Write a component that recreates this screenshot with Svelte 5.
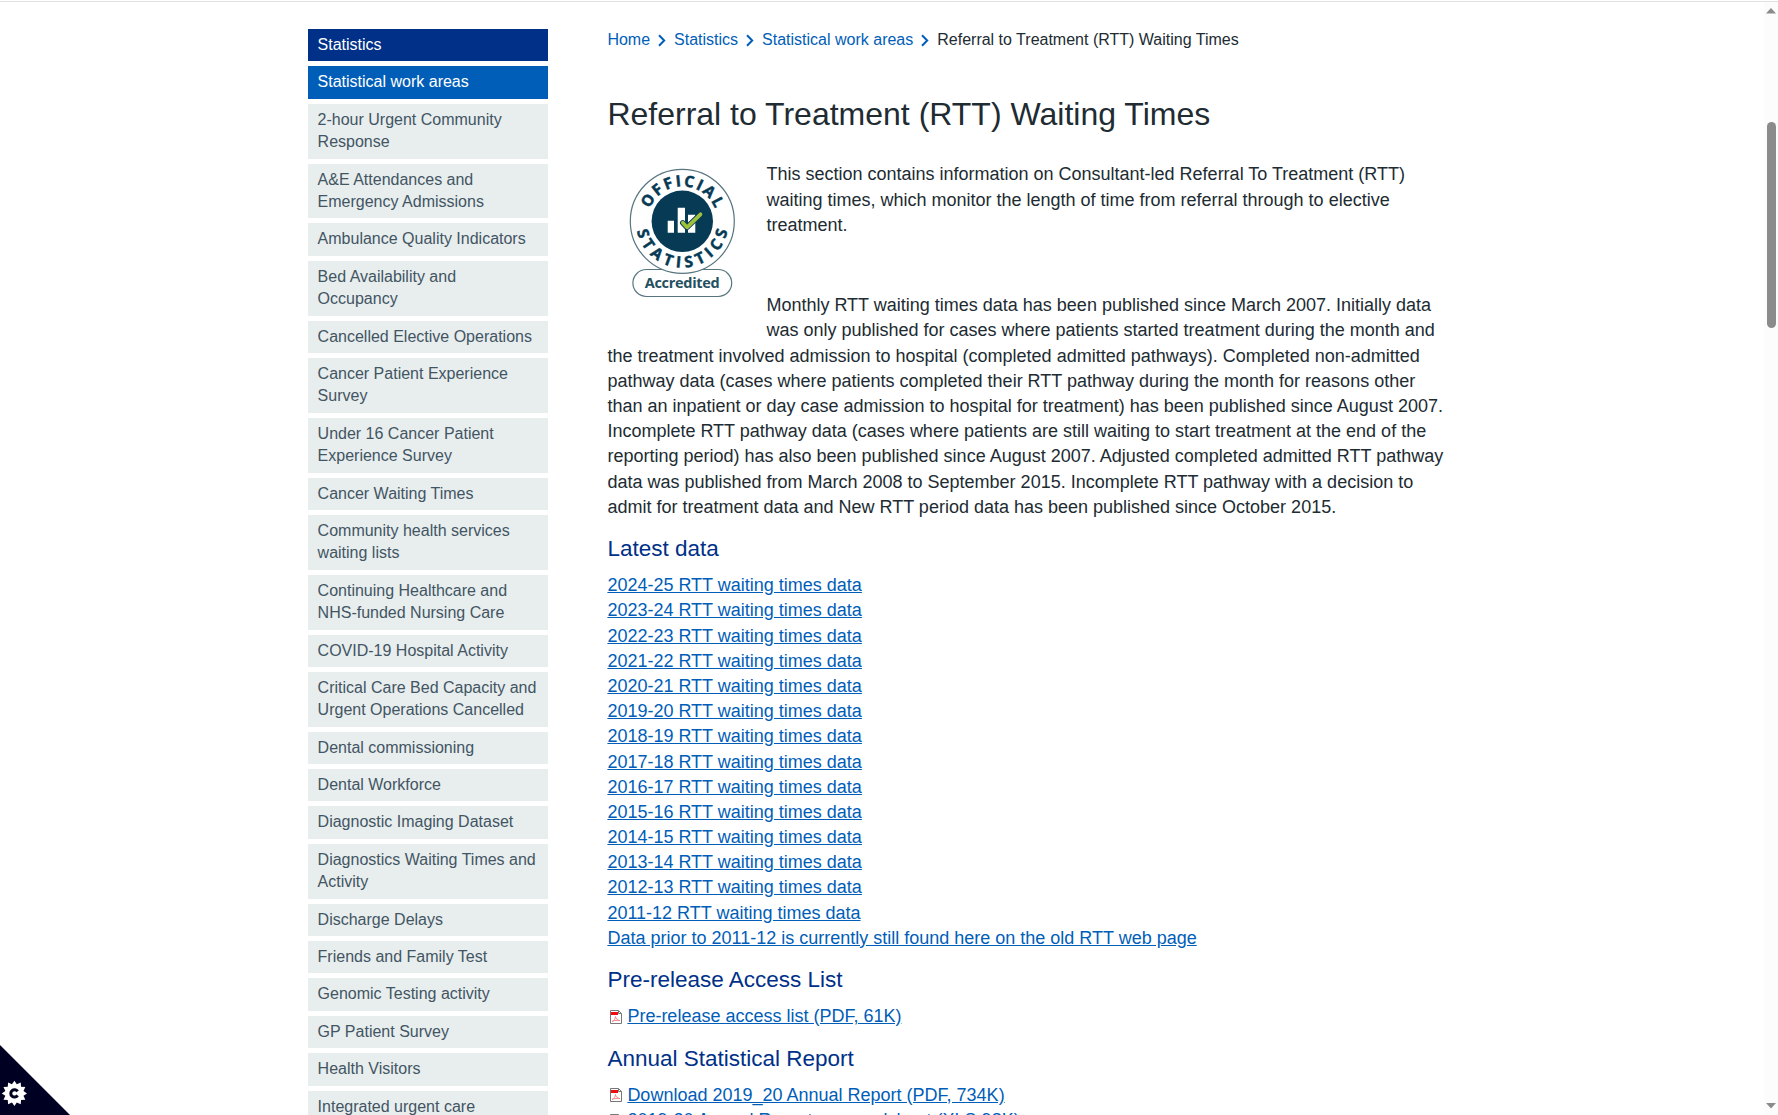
<script>
  const areas = [
    '2-hour Urgent Community Response',
    'A&E Attendances and Emergency Admissions',
    'Ambulance Quality Indicators',
    'Bed Availability and Occupancy',
    'Cancelled Elective Operations',
    'Cancer Patient Experience Survey',
    'Under 16 Cancer Patient Experience Survey',
    'Cancer Waiting Times',
    'Community health services waiting lists',
    'Continuing Healthcare and NHS-funded Nursing Care',
    'COVID-19 Hospital Activity',
    'Critical Care Bed Capacity and Urgent Operations Cancelled',
    'Dental commissioning',
    'Dental Workforce',
    'Diagnostic Imaging Dataset',
    'Diagnostics Waiting Times and Activity',
    'Discharge Delays',
    'Friends and Family Test',
    'Genomic Testing activity',
    'GP Patient Survey',
    'Health Visitors',
    'Integrated urgent care'
  ];
  const crumbs = ['Home', 'Statistics', 'Statistical work areas'];
  const years = Array.from({ length: 14 }, (_, i) => `${2024 - i}-${25 - i}`);

  // Twelve-toothed gear outline for the cookie settings button
  const gear = Array.from({ length: 24 }, (_, i) => {
    const r = i % 2 ? 9.4 : 12.6;
    const a = (i * Math.PI) / 12;
    return `${(14.4 + r * Math.cos(a)).toFixed(2)},${(48.4 + r * Math.sin(a)).toFixed(2)}`;
  }).join(' ');
</script>

{#snippet pdfIcon()}
  <svg class="file" width="12" height="14" viewBox="0 0 12 14">
    <path d="M.5.5h8l3 3v10H.5z" fill="#fff" stroke="#777" />
    <path d="M8.5.5v3h3" fill="none" stroke="#777" />
    <path d="M1 2h7v3H1z" fill="#f00d12" />
    <path d="M2 11.500c2-.8 3.500-3 3.500-5 0 2 2 3.800 4.500 4.100-2.500-.5-5.500-.3-8 .9" fill="none" stroke="#f58a8e" stroke-width="1" />
  </svg>
{/snippet}

<div class="page">
  <div class="layout">
    <nav class="side">
      <a class="root" href="#top">Statistics</a>
      <a class="current" href="#top">Statistical work areas</a>
      {#each areas as area}
        <a href="#top">{area}</a>
      {/each}
    </nav>

    <main>
      <div class="crumbs">
        {#each crumbs as crumb}
          <a href="#top">{crumb}</a>
          <svg width="8" height="13" viewBox="0 0 8 13"><path d="M1 1.200 6.200 6.500 1 11.800" fill="none" stroke="#005eb8" stroke-width="2" /></svg>
        {/each}
        <span>Referral to Treatment (RTT) Waiting Times</span>
      </div>

      <h1>Referral to Treatment (RTT) Waiting Times</h1>

      <svg class="badge" width="150" height="165" viewBox="0 0 150 165">
        <defs>
          <path id="arc-top" d="M40.300 60.300a35 35 0 0 1 70 0" />
          <path id="arc-bottom" d="M30.020 50.700a46.300 46.300 0 1 0 90.560 0" />
        </defs>
        <rect x="25.900" y="108.500" width="98.800" height="27" rx="13.500" fill="#fff" stroke="#56757f" stroke-width="1.200" />
        <circle cx="75.300" cy="60.300" r="52" fill="#fff" stroke="#56757f" stroke-width="1.200" />
        <circle cx="75.300" cy="60.300" r="30.700" fill="#063a55" />
        <text class="ring" text-anchor="middle"><textPath href="#arc-top" startOffset="50%" textLength="84">OFFICIAL</textPath></text>
        <text class="ring" text-anchor="middle"><textPath href="#arc-bottom" startOffset="50%" textLength="126">STATISTICS</textPath></text>
        <path d="M60.700 59.700h6.300v12h-6.300zM70.700 46.700h7.300v25h-7.300zM81 53.700h7.300v18H81z" fill="#fff" />
        <path d="M75.800 61.800 80 66.300 93.500 53.300" fill="none" stroke="#063a55" stroke-width="5.500" stroke-linecap="round" stroke-linejoin="round" />
        <path d="M75.800 61.800 80 66.300 93.500 53.300" fill="none" stroke="#9fc13b" stroke-width="3.700" stroke-linecap="round" stroke-linejoin="round" />
        <text class="pill" x="75.200" y="127.100" text-anchor="middle" textLength="75">Accredited</text>
      </svg>

      <p class="intro">
        This section contains information on Consultant-led Referral To Treatment (RTT) waiting times, which
        monitor the length of time from referral through to elective treatment.
      </p>
      <p>
        Monthly RTT waiting times data has been published since March 2007. Initially data was only published
        for cases where patients started treatment during the month and the treatment involved admission to
        hospital (completed admitted pathways). Completed non-admitted pathway data (cases where patients
        completed their RTT pathway during the month for reasons other than an inpatient or day case admission
        to hospital for treatment) has been published since August 2007. Incomplete RTT pathway data (cases
        where patients are still waiting to start treatment at the end of the reporting period) has also been
        published since August 2007. Adjusted completed admitted RTT pathway data was published from March 2008
        to September 2015. Incomplete RTT pathway with a decision to admit for treatment data and New RTT
        period data has been published since October 2015.
      </p>

      <h3>Latest data</h3>
      <div class="links">
        {#each years as year}
          <div><a href="#top">{year} RTT waiting times data</a></div>
        {/each}
        <div><a href="#top">Data prior to 2011-12 is currently still found here on the old RTT web page</a></div>
      </div>

      <h3>Pre-release Access List</h3>
      <div class="links">
        <div class="doc">{@render pdfIcon()}<a href="#top">Pre-release access list (PDF, 61K)</a></div>
      </div>

      <h3>Annual Statistical Report</h3>
      <div class="links">
        <div class="doc">{@render pdfIcon()}<a href="#top">Download 2019_20 Annual Report (PDF, 734K)</a></div>
        <div class="doc">
          <svg class="file" width="12" height="14" viewBox="0 0 12 14">
            <path d="M.5.5h8l3 3v10H.5z" fill="#c5e39a" stroke="#777" />
          </svg><a href="#top">2019-20 Annual Report – spreadsheet (XLS,98K)</a>
        </div>
      </div>
    </main>
  </div>

  <svg class="cookie" width="70" height="70" viewBox="0 0 70 70">
    <path d="M0 0 70 70H0z" fill="#000022" />
    <polygon points={gear} fill="#fff" />
    <path d="M17.600 46.400a3.700 3.700 0 1 0 0 4" fill="none" stroke="#000022" stroke-width="3" />
  </svg>

  <div class="scrollbar">
    <svg width="10" height="6" viewBox="0 0 10 6"><path d="M0 5.500 5 0l5 5.500z" fill="#8b8b8b" /></svg>
    <div class="thumb"></div>
    <svg class="down" width="10" height="6" viewBox="0 0 10 6"><path d="M0 0h10L5 5.500z" fill="#8b8b8b" /></svg>
  </div>
</div>

<style>
  :global(body) {
    overflow: hidden;
  }
  .page {
    position: relative;
    box-sizing: border-box;
    height: 1115px;
    overflow: hidden;
    padding-top: 1px;
    background: #fff;
    color: #212b32;
    font: 18px/1.4 'Liberation Sans', Arial, sans-serif;
  }
  .layout {
    display: flex;
    border-top: 1px solid #dfe1e2;
    padding: 27.080px 0 0 308px;
  }
  a {
    color: #005eb8;
  }
  .side {
    display: flex;
    flex: 0 0 240px;
    flex-direction: column;
    gap: 5px;
    font-size: 16px;
  }
  .side a {
    padding: 5px 9.600px;
    background: #e8edee;
    color: #425563;
    text-decoration: none;
  }
  .side .root {
    background: #003087;
    color: #fff;
  }
  .side .current {
    background: #005eb8;
    color: #fff;
  }
  main {
    width: 840px;
    margin-left: 59.400px;
  }
  .crumbs {
    display: flex;
    align-items: center;
    gap: 8px;
    height: 22px;
    font-size: 16px;
  }
  .crumbs a {
    text-decoration: none;
  }
  h1 {
    margin: 41px 0 25.250px;
    font-size: 32px;
    font-weight: 400;
    line-height: 45px;
  }
  .badge {
    float: left;
    margin: -1.200px 9px 0 0;
  }
  .ring {
    fill: #063a55;
    stroke: #063a55;
    stroke-width: 0.500px;
    font: 700 15.500px 'Open Sans', sans-serif;
  }
  .pill {
    fill: #24505f;
    font: 700 14.500px 'Open Sans', sans-serif;
  }
  p {
    margin: 0;
  }
  .intro {
    margin-bottom: 55.350px;
  }
  h3 {
    margin: 13.100px 0 8.700px;
    color: #003087;
    font-size: 22.500px;
    font-weight: 400;
    line-height: 31.500px;
  }
  .doc {
    display: flex;
    align-items: center;
    gap: 5.300px;
    padding-left: 2.700px;
    white-space: nowrap;
  }
  .file {
    flex: none;
  }
  .cookie {
    position: absolute;
    bottom: 0;
    left: 0;
  }
  .scrollbar {
    position: absolute;
    top: 2px;
    right: 0;
    bottom: 0;
    display: flex;
    flex-direction: column;
    align-items: center;
    box-sizing: border-box;
    width: 14px;
    padding: 6px 0;
    background: #fcfcfc;
  }
  .thumb {
    width: 9px;
    height: 206px;
    margin-top: 108px;
    border-radius: 5px;
    background: #8b8b8b;
  }
  .down {
    margin-top: auto;
  }
</style>
